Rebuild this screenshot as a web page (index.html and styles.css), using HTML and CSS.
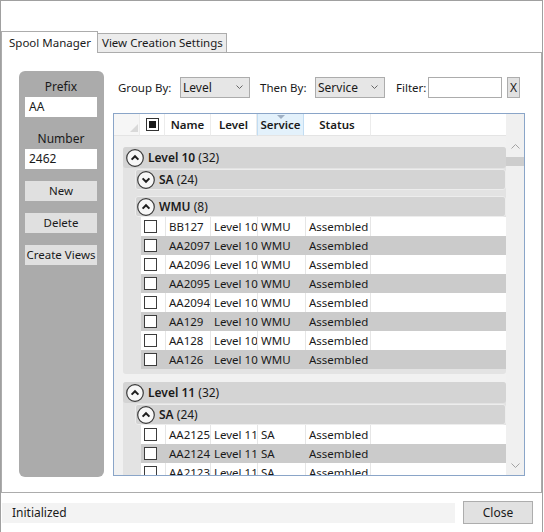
FILE: index.html
```html
<!DOCTYPE html>
<html>
<head>
<meta charset="utf-8">
<link rel="stylesheet" href="styles.css">
</head>
<body>
<div class="window">
  <div class="titlespace"></div>
  <div class="tabs">
    <div class="tab active">Spool Manager</div>
    <div class="tab">View Creation Settings</div>
  </div>
  <div class="panel">
    <div class="side">
      <div class="lbl">Prefix</div>
      <div class="field">AA</div>
      <div class="lbl lbl2">Number</div>
      <div class="field">2462</div>
      <div class="btn">New</div>
      <div class="btn">Delete</div>
      <div class="btn">Create Views</div>
    </div>
    <div class="main">
      <div class="toolbar">
        <div class="tl tl-group">Group By:</div>
        <div class="combo"><span>Level</span><svg class="cv" width="7" height="4" viewBox="0 0 7 4"><polyline points="0.5,0.5 3.5,3.5 6.5,0.5" fill="none" stroke="#666" stroke-width="1"/></svg></div>
        <div class="tl tl-then">Then By:</div>
        <div class="combo"><span>Service</span><svg class="cv" width="7" height="4" viewBox="0 0 7 4"><polyline points="0.5,0.5 3.5,3.5 6.5,0.5" fill="none" stroke="#666" stroke-width="1"/></svg></div>
        <div class="tl tl-filter">Filter:</div>
        <div class="filter"></div>
        <div class="xbtn">X</div>
      </div>
      <div class="grid">
        <div class="grid-main">
          <div class="ghead">
            <div class="hc corner"><svg width="8" height="8" viewBox="0 0 8 8"><polygon points="8,0 8,8 0,8" fill="#d9d9d9"/></svg></div>
            <div class="hc hchk"><div class="hbox"><div class="hfill"></div></div></div>
            <div class="hc c-name">Name</div>
            <div class="hc c-level">Level</div>
            <div class="hc c-service sorted"><svg class="sort" width="8" height="4" viewBox="0 0 8 4"><polygon points="0,0 8,0 4,4" fill="#9fb0c4"/></svg>Service</div>
            <div class="hc c-status">Status</div>
            <div class="hc hfill-col"></div>
          </div>
          <div class="gbody">
            <div class="group">
              <div class="ghdr">
                <svg class="exp" width="18" height="18" viewBox="0 0 18 18"><circle cx="9" cy="9" r="8.3" fill="#f7f7f7" stroke="#3a3a3a" stroke-width="1.2"/><polyline points="5.6,10.6 9,7.2 12.4,10.6" fill="none" stroke="#1e1e1e" stroke-width="2"/></svg>
                <span class="gt"><b>Level 10</b> (32)</span>
              </div>
              <div class="sub">
                <div class="ghdr">
                  <svg class="exp" width="18" height="18" viewBox="0 0 18 18"><circle cx="9" cy="9" r="8.3" fill="#f7f7f7" stroke="#3a3a3a" stroke-width="1.2"/><polyline points="5.6,7.4 9,10.8 12.4,7.4" fill="none" stroke="#1e1e1e" stroke-width="2"/></svg>
                  <span class="gt"><b>SA</b> (24)</span>
                </div>
              </div>
              <div class="sub sub-gap">
                <div class="ghdr">
                  <svg class="exp" width="18" height="18" viewBox="0 0 18 18"><circle cx="9" cy="9" r="8.3" fill="#f7f7f7" stroke="#3a3a3a" stroke-width="1.2"/><polyline points="5.6,10.6 9,7.2 12.4,10.6" fill="none" stroke="#1e1e1e" stroke-width="2"/></svg>
                  <span class="gt"><b>WMU</b> (8)</span>
                </div>
                <div class="rows">
                  <div class="row w"><div class="c c1"><div class="cb"></div></div><div class="c c2">BB127</div><div class="c c3">Level 10</div><div class="c c4">WMU</div><div class="c c5">Assembled</div><div class="c c6"></div></div>
                  <div class="row g"><div class="c c1"><div class="cb"></div></div><div class="c c2">AA2097</div><div class="c c3">Level 10</div><div class="c c4">WMU</div><div class="c c5">Assembled</div><div class="c c6"></div></div>
                  <div class="row w"><div class="c c1"><div class="cb"></div></div><div class="c c2">AA2096</div><div class="c c3">Level 10</div><div class="c c4">WMU</div><div class="c c5">Assembled</div><div class="c c6"></div></div>
                  <div class="row g"><div class="c c1"><div class="cb"></div></div><div class="c c2">AA2095</div><div class="c c3">Level 10</div><div class="c c4">WMU</div><div class="c c5">Assembled</div><div class="c c6"></div></div>
                  <div class="row w"><div class="c c1"><div class="cb"></div></div><div class="c c2">AA2094</div><div class="c c3">Level 10</div><div class="c c4">WMU</div><div class="c c5">Assembled</div><div class="c c6"></div></div>
                  <div class="row g"><div class="c c1"><div class="cb"></div></div><div class="c c2">AA129</div><div class="c c3">Level 10</div><div class="c c4">WMU</div><div class="c c5">Assembled</div><div class="c c6"></div></div>
                  <div class="row w"><div class="c c1"><div class="cb"></div></div><div class="c c2">AA128</div><div class="c c3">Level 10</div><div class="c c4">WMU</div><div class="c c5">Assembled</div><div class="c c6"></div></div>
                  <div class="row g"><div class="c c1"><div class="cb"></div></div><div class="c c2">AA126</div><div class="c c3">Level 10</div><div class="c c4">WMU</div><div class="c c5">Assembled</div><div class="c c6"></div></div>
                </div>
              </div>
            </div>
            <div class="group">
              <div class="ghdr">
                <svg class="exp" width="18" height="18" viewBox="0 0 18 18"><circle cx="9" cy="9" r="8.3" fill="#f7f7f7" stroke="#3a3a3a" stroke-width="1.2"/><polyline points="5.6,10.6 9,7.2 12.4,10.6" fill="none" stroke="#1e1e1e" stroke-width="2"/></svg>
                <span class="gt"><b>Level 11</b> (32)</span>
              </div>
              <div class="sub">
                <div class="ghdr">
                  <svg class="exp" width="18" height="18" viewBox="0 0 18 18"><circle cx="9" cy="9" r="8.3" fill="#f7f7f7" stroke="#3a3a3a" stroke-width="1.2"/><polyline points="5.6,10.6 9,7.2 12.4,10.6" fill="none" stroke="#1e1e1e" stroke-width="2"/></svg>
                  <span class="gt"><b>SA</b> (24)</span>
                </div>
                <div class="rows">
                  <div class="row w"><div class="c c1"><div class="cb"></div></div><div class="c c2">AA2125</div><div class="c c3">Level 11</div><div class="c c4">SA</div><div class="c c5">Assembled</div><div class="c c6"></div></div>
                  <div class="row g"><div class="c c1"><div class="cb"></div></div><div class="c c2">AA2124</div><div class="c c3">Level 11</div><div class="c c4">SA</div><div class="c c5">Assembled</div><div class="c c6"></div></div>
                  <div class="row w"><div class="c c1"><div class="cb"></div></div><div class="c c2">AA2123</div><div class="c c3">Level 11</div><div class="c c4">SA</div><div class="c c5">Assembled</div><div class="c c6"></div></div>
                </div>
              </div>
            </div>
          </div>
        </div>
        <div class="vscroll">
          <div class="vs-top"></div>
          <div class="vs-btn"><svg width="9" height="5" viewBox="0 0 9 5"><polyline points="0.5,4.5 4.5,0.5 8.5,4.5" fill="none" stroke="#a3a3a3" stroke-width="1"/></svg></div>
          <div class="vs-thumb"></div>
          <div class="vs-track"></div>
          <div class="vs-btn"><svg width="9" height="5" viewBox="0 0 9 5"><polyline points="0.5,0.5 4.5,4.5 8.5,0.5" fill="none" stroke="#a3a3a3" stroke-width="1"/></svg></div>
        </div>
      </div>
    </div>
  </div>
  <div class="status">
    <div class="status-text">Initialized</div>
    <div class="close">Close</div>
  </div>
</div>
</body>
</html>
```
FILE: styles.css
```css
html, body {
  margin: 0;
  padding: 0;
  background: #ffffff;
}
body {
  width: 544px;
  height: 532px;
  overflow: hidden;
  font-family: "Noto Sans", "Open Sans", sans-serif;
  font-size: 11.5px;
  color: #1a1a1a;
}
.window {
  box-sizing: border-box;
  width: 543px;
  height: 532px;
  border: 1px solid #a0a0a0;
  border-bottom: none;
  display: flex;
  flex-direction: column;
}
.titlespace {
  height: 30px;
  flex: none;
}
.tabs {
  height: 21px;
  flex: none;
  display: flex;
  align-items: flex-start;
}
.tab {
  box-sizing: border-box;
  margin-top: 2px;
  height: 19px;
  width: 129px;
  border: 1px solid #acacac;
  border-left: none;
  border-bottom: none;
  background: #ececec;
  padding-left: 4px;
  line-height: 18px;
  white-space: nowrap;
  font-size: 11.5px;
}
.tab.active {
  margin-top: 0;
  width: 97px;
  height: 22px;
  border-left: 1px solid #acacac;
  background: #ffffff;
  padding-left: 7px;
  line-height: 22px;
  position: relative;
  z-index: 1;
}
.panel {
  box-sizing: border-box;
  height: 441px;
  flex: none;
  border: 1px solid #acacac;
  display: flex;
  padding: 18px 16px 15px 17px;
  gap: 9px;
}
.side {
  box-sizing: border-box;
  width: 85px;
  height: 406px;
  flex: none;
  background: #ababab;
  border-radius: 6px;
  padding: 6px 7px 0 6px;
  display: flex;
  flex-direction: column;
}
.lbl {
  height: 20px;
  line-height: 20px;
  text-align: center;
  font-size: 12px;
}
.lbl2 {
  margin-top: 12px;
}
.field {
  height: 20px;
  line-height: 20px;
  background: #ffffff;
  padding-left: 4px;
  font-size: 12px;
}
.btn {
  margin-top: 12px;
  height: 20px;
  line-height: 20px;
  text-align: center;
  background: #e0e0e0;
  font-size: 11.5px;
}
.main {
  width: 412px;
  flex: none;
  display: flex;
  flex-direction: column;
}
.toolbar {
  margin-top: 6px;
  height: 21px;
  display: flex;
  align-items: center;
  flex: none;
}
.tl {
  box-sizing: border-box;
  white-space: nowrap;
  font-size: 11.5px;
}
.tl-group {
  width: 67px;
  padding-left: 5px;
}
.tl-then {
  width: 55px;
  margin-left: 10px;
}
.tl-filter {
  width: 32px;
  margin-left: 11px;
}
.combo {
  box-sizing: border-box;
  width: 70px;
  height: 21px;
  border: 1px solid #acacac;
  background: #e6e6e6;
  display: flex;
  align-items: center;
  justify-content: space-between;
  padding: 0 6px 0 2px;
  font-size: 12px;
}
.cv {
  margin-top: -2px;
}
.filter {
  box-sizing: border-box;
  width: 74px;
  height: 21px;
  border: 1px solid #acacac;
  background: #ffffff;
}
.xbtn {
  box-sizing: border-box;
  width: 13px;
  height: 21px;
  margin-left: 5px;
  border: 1px solid #adadad;
  background: #e1e1e1;
  text-align: center;
  line-height: 19px;
  font-size: 12px;
}
.grid {
  box-sizing: border-box;
  margin-top: 15px;
  height: 363px;
  border: 1px solid #8aa5c8;
  display: flex;
  overflow: hidden;
}
.grid-main {
  width: 392px;
  flex: none;
  display: flex;
  flex-direction: column;
  overflow: hidden;
}
.ghead {
  height: 22px;
  flex: none;
  display: flex;
  background: #ffffff;
}
.hc {
  box-sizing: border-box;
  height: 22px;
  border-right: 1px solid #ececec;
  border-bottom: 1px solid #e4e4e4;
  font-weight: 600;
  line-height: 21px;
  text-align: center;
  white-space: nowrap;
  font-size: 11.5px;
}
.corner {
  width: 26px;
  background: #f6f6f6;
  display: flex;
  align-items: flex-end;
  justify-content: flex-end;
  padding: 0 1px 3px 0;
}
.corner svg {
  display: block;
}
.hchk {
  width: 25px;
  display: flex;
  align-items: center;
  justify-content: center;
}
.hbox {
  box-sizing: border-box;
  width: 13px;
  height: 13px;
  border: 1px solid #333333;
  background: #ffffff;
  display: flex;
  align-items: center;
  justify-content: center;
}
.hfill {
  width: 7px;
  height: 7px;
  background: #1a1a1a;
}
.c-name { width: 46px; }
.c-level { width: 46px; }
.c-service { width: 47px; }
.c-status { width: 67px; }
.hfill-col { flex: 1; border-right: none; }
.sorted {
  position: relative;
  background: #e3f1fb;
  border-left: 1px solid #c2ddf3;
  border-right: 1px solid #c2ddf3;
}
.sort {
  position: absolute;
  left: 19px;
  top: 1px;
}
.gbody {
  flex: 1;
  background: #f1f1f1;
  padding-top: 11px;
}
.group {
  margin-left: 9px;
  background: #e3e3e3;
  border-radius: 3px;
  padding-bottom: 5px;
  margin-bottom: 8px;
}
.ghdr {
  height: 21px;
  background: #d4d4d4;
  border-radius: 3px;
  display: flex;
  align-items: center;
  padding-left: 3px;
  white-space: nowrap;
  font-size: 12px;
}
.exp {
  display: block;
  flex: none;
}
.gt {
  margin-left: 4px;
}
.gt b {
  font-weight: 600;
}
.sub {
  margin-left: 12px;
  margin-top: 1px;
}
.sub .ghdr {
  padding-left: 2px;
  box-shadow: 0 0 0 1px #ededed inset;
}
.sub-gap {
  margin-top: 6px;
}
.rows {
  margin-left: 6px;
}
.row {
  height: 19px;
  display: flex;
  line-height: 19px;
  white-space: nowrap;
}
.row.w {
  background: #ffffff;
}
.row.g {
  background: #cbcbcb;
}
.c {
  box-sizing: border-box;
  padding-left: 3px;
  overflow: hidden;
}
.row.w .c {
  border-right: 1px solid #e6e6e6;
}
.row.w .c6 {
  border-right: none;
}
.c1 {
  width: 25px;
  display: flex;
  align-items: center;
}
.c2 { width: 45px; }
.c3 { width: 47px; }
.c4 { width: 48px; }
.c5 { width: 65px; }
.c6 { flex: 1; }
.cb {
  box-sizing: border-box;
  width: 13px;
  height: 13px;
  border: 1px solid #3c3c3c;
  background: #ffffff;
}
.vscroll {
  flex: 1;
  background: #f0f0f0;
  display: flex;
  flex-direction: column;
}
.vs-top {
  height: 22px;
  flex: none;
}
.vs-btn {
  height: 20px;
  flex: none;
  display: flex;
  align-items: center;
  justify-content: center;
}
.vs-btn svg {
  display: block;
}
.vs-thumb {
  height: 9px;
  margin-top: 1px;
  background: #cdcdcd;
  flex: none;
}
.vs-track {
  flex: 1;
}
.status {
  flex: 1;
  display: flex;
  align-items: center;
}
.status-text {
  box-sizing: border-box;
  width: 453px;
  height: 20px;
  margin-left: 1px;
  background: #f3f3f3;
  padding-left: 10px;
  line-height: 20px;
  font-size: 12px;
}
.close {
  box-sizing: border-box;
  width: 70px;
  height: 23px;
  margin-left: 8px;
  border: 1px solid #adadad;
  background: #e1e1e1;
  text-align: center;
  line-height: 21px;
  font-size: 12px;
  flex: none;
}
```
